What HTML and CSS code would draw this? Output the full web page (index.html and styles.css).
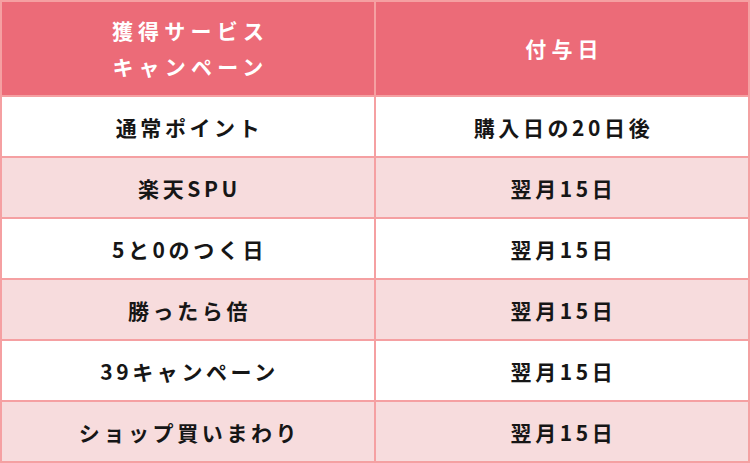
FILE: index.html
```html
<!DOCTYPE html>
<html lang="ja">
<head>
<meta charset="utf-8">
<link rel="stylesheet" href="styles.css">
</head>
<body>
<table class="campaign">
  <thead>
    <tr>
      <th>獲得サービス<br>キャンペーン</th>
      <th>付与日</th>
    </tr>
  </thead>
  <tbody>
    <tr><td>通常ポイント</td><td>購入日の20日後</td></tr>
    <tr class="alt"><td>楽天SPU</td><td>翌月15日</td></tr>
    <tr><td>5と0のつく日</td><td>翌月15日</td></tr>
    <tr class="alt"><td>勝ったら倍</td><td>翌月15日</td></tr>
    <tr><td>39キャンペーン</td><td>翌月15日</td></tr>
    <tr class="alt"><td>ショップ買いまわり</td><td>翌月15日</td></tr>
  </tbody>
</table>
</body>
</html>
```
FILE: styles.css
```css
html, body {
  margin: 0;
  padding: 0;
  background: #ffffff;
}
.campaign {
  width: 750px;
  border-collapse: collapse;
  table-layout: fixed;
  font-family: "Noto Sans CJK JP", "Noto Sans", sans-serif;
  font-weight: 700;
}
.campaign th,
.campaign td {
  border: 2px solid #f5a0a2;
  text-align: center;
  vertical-align: middle;
}
.campaign th {
  background: #ec6b78;
  color: #ffffff;
  height: 91px;
  font-size: 21px;
  line-height: 36px;
  letter-spacing: 5.2px;
  padding: 0 0 2px 5px;
}
.campaign td {
  height: 59px;
  font-size: 21px;
  line-height: 24px;
  letter-spacing: 3.6px;
  padding: 0 0 0 3px;
  color: #161616;
  background: #ffffff;
}
.campaign tr.alt td {
  background: #f7dcdd;
}
```
